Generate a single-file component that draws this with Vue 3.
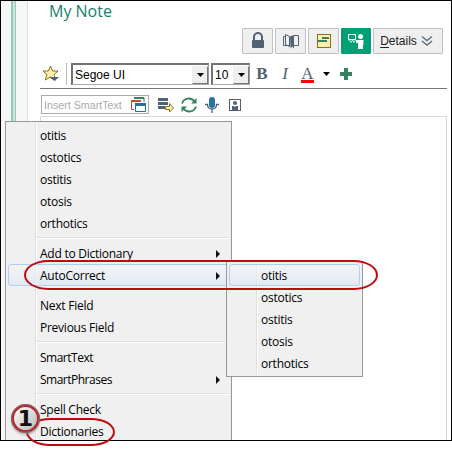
<script setup>
const words = ['otitis', 'ostotics', 'ostitis', 'otosis', 'orthotics']
const groups = [
  words.map((label) => ({ label })),
  [{ label: 'Add to Dictionary', sub: true }, { label: 'AutoCorrect', sub: true, active: true }],
  [{ label: 'Next Field' }, { label: 'Previous Field' }],
  [{ label: 'SmartText', tight: true }, { label: 'SmartPhrases', sub: true, tight: true }],
  [{ label: 'Spell Check' }, { label: 'Dictionaries' }],
]
</script>

<template>
  <div class="page">
    <div class="frame">
      <div class="gutter"><div class="stripe"></div></div>
      <main class="note">
        <h1>My Note</h1>
        <div class="actions">
          <button class="btn">
            <svg width="14" height="18" viewBox="0 0 14 18"><path d="M3 8V5a4 4 0 0 1 8 0v3" fill="none" stroke="#506273" stroke-width="2" /><rect x="1" y="8" width="12" height="8" rx="1" fill="#506273" /></svg>
          </button>
          <button class="btn">
            <svg width="18" height="18" viewBox="0 0 18 18"><path d="M3.500 4.500H1.500V13.500H7M3.500 2.500L7.500 4.500V14.500L3.500 12.500ZM12 3.500H16.500V13.500H12" fill="none" stroke="#506273" /><path d="M8 4.500L12 3V16.500L10.200 14.500L8.500 16.500Z" fill="#506273" /></svg>
          </button>
          <button class="btn">
            <svg width="16" height="16" viewBox="0 0 16 16"><rect x="1.500" y="1.500" width="13" height="13" fill="#ffefac" stroke="#89711b" /><path d="M6 4h7v2H6z" fill="#34835e" /><path d="M2 7h9v2H2z" fill="#34835e" /></svg>
          </button>
          <button class="btn on">
            <svg width="18" height="18" viewBox="0 0 18 18"><path d="M1.500 2.500H8.500V7.500H1.500Z" fill="none" stroke="#fff" /><path d="M2 8L4 10.500L5.500 8L7 10.500L8.500 8" fill="none" stroke="#fff" stroke-width=".8" /><circle cx="13.500" cy="4.500" r="2.500" fill="#fff" /><path d="M9 8h7.500v5H16v4h-5v-6H9z" fill="#fff" /></svg>
          </button>
          <button class="btn details"><span><u>D</u>etails</span>
            <svg width="12" height="12" viewBox="0 0 12 12"><path d="M1 1.500L6 5.500L11 1.500M1 6L6 10L11 6" fill="none" stroke="#607080" stroke-width="1.500" /></svg>
          </button>
        </div>

        <div class="fontbar">
          <svg class="star" width="18" height="18" viewBox="0 0 18 18"><path d="M8.500 1L10.600 6H16L12 9.700L13.500 15L8.500 12L3.200 15L5 9.700L1 6H6.400Z" fill="#ffefac" stroke="#89711b" /><path d="M7 12h10l-4.500 4z" fill="#506273" /></svg>
          <i class="rule"></i>
          <div class="select family"><span>Segoe UI</span><b><svg width="7" height="4"><path d="M0 0h7L3.500 4z" /></svg></b></div>
          <div class="select size"><span>10</span><b><svg width="7" height="4"><path d="M0 0h7L3.500 4z" /></svg></b></div>
          <span class="glyph bold">B</span>
          <span class="glyph ital">I</span>
          <span class="glyph color">A</span>
          <svg class="caret" width="7" height="4"><path d="M0 0h7L3.500 4z" /></svg>
          <svg class="plus" width="12" height="12"><path d="M4 0h4v4h4v4H8v4H4V8H0V4h4z" fill="#34835e" /></svg>
        </div>

        <div class="smartbar">
          <div class="field"><span>Insert SmartText</span>
            <svg width="15" height="16" viewBox="0 0 15 16"><path d="M3.500 2V.5h9.500v4.500" fill="none" stroke="#34835e" /><path d="M3 0h10v2H3z" fill="#34835e" /><path d="M9.500 5V3.500H.500V12.500h2.500" fill="none" stroke="#c04d2b" /><path d="M0 3h10v2H0z" fill="#c04d2b" /><path d="M4.500 6.500h10v8h-10z" fill="#fff" stroke="#2572a5" /><path d="M4 6h11v3H4z" fill="#2572a5" /></svg>
          </div>
          <svg class="lines" width="17" height="16" viewBox="0 0 17 16"><path d="M0 1h10v3H0zM0 5h10v3H0zM0 9h7v3H0z" fill="#506273" /><path d="M7.500 9.500h4V6.500L15.500 11L11.500 15V12.500h-4z" fill="#ffefac" stroke="#89711b" /></svg>
          <svg class="refresh" width="16" height="16" viewBox="0 0 16 16"><path d="M1 6.500C3 0.500 10 0 13.500 4.500M15 9.500C13 15.500 6 16 2.500 11.500" fill="none" stroke="#34835e" stroke-width="1.800" /><path d="M15.500 1v5.500H10zM.5 15V9.500H6z" fill="#34835e" /></svg>
          <svg class="mic" width="14" height="16" viewBox="0 0 14 16"><rect x="4" y="0" width="6" height="11" rx="3" fill="#2572a5" /><path d="M0 7.500H2.500C2 13.500 12 13.500 11.500 7.500H14M7 12v4" fill="none" stroke="#506273" stroke-width="1.300" /></svg>
          <svg class="person" width="12" height="12" viewBox="0 0 12 12"><rect x=".5" y=".5" width="11" height="11" fill="#fff" stroke="#506273" /><circle cx="6" cy="4" r="2" fill="#506273" /><path d="M3 7h2l1 1 1-1h2v4H3z" fill="#506273" /></svg>
        </div>
        <div class="editor"></div>
      </main>

      <div class="menu main">
        <div v-for="(g, n) in groups" :key="n" class="group">
          <div v-for="item in g" :key="item.label" class="item" :class="{ active: item.active, tight: item.tight }">
            <span>{{ item.label }}</span>
            <svg v-if="item.sub" width="4" height="8"><path d="M0 0L4 4L0 8z" fill="#111" /></svg>
          </div>
        </div>
      </div>
      <div class="menu submenu">
        <div v-for="(w, n) in words" :key="w" class="item" :class="{ active: n === 0 }"><span>{{ w }}</span></div>
      </div>
    </div>
    <div class="ring wide"></div>
    <div class="ring small"></div>
    <div class="badge">1</div>
  </div>
</template>

<style>
body { margin: 0; background: #fff; overflow: hidden; }
</style>

<style scoped>
* { box-sizing: border-box; }
.page { position: relative; width: 452px; height: 449px; background: #fff; font-family: "Liberation Sans", sans-serif; }
.frame { position: relative; display: flex; width: 452px; height: 441px; border: 1px solid #000; overflow: hidden; }
.gutter { width: 27px; flex: none; background: #f7f7f7; border-right: 1px solid #dcdcdc; padding-left: 10px; }
.stripe { width: 5px; height: 100%; background: #cfe3de; border: solid #8fcdbd; border-width: 0 1px 0 2px; }
.note { flex: 1; display: flex; flex-direction: column; padding: 0 4px 0 12px; }
h1 { margin: 0 0 0 9px; height: 27px; font: 16px/21px "Open Sans", sans-serif; color: #16816c; white-space: nowrap; }
.actions { display: flex; justify-content: flex-end; gap: 2px; padding-right: 4px; height: 26px; }
.btn { width: 31px; height: 26px; padding: 0; display: flex; align-items: center; justify-content: center; background: #efefef; border: 1px solid #bfc0c6; border-radius: 1px; font: 12px "Liberation Sans", sans-serif; color: #222; }
.btn.on { width: 30px; background: #00a077; border-color: #00a077; }
.btn.details { width: 70px; gap: 4px; padding-right: 3px; }
u { text-underline-offset: 2px; }
.fontbar { display: flex; align-items: center; height: 35px; padding-top: 6px; margin-bottom: 6px; border-bottom: 1px solid #777; }
.star { margin-left: 2px; margin-right: 6px; }
.rule { width: 1px; height: 22px; background: #bbb; margin-right: 4px; }
.select { height: 22px; display: flex; align-items: center; border: 2px solid #737373; border-right: 1px solid #999; border-bottom: 1px solid #aaa; font-size: 12px; color: #000; background: #fff; }
.select span { flex: 1; padding-left: 2px; }
.select b { width: 16px; height: 18px; background: #efefef; border: 1px solid #eee; border-right-color: #777; border-bottom-color: #777; display: flex; align-items: center; justify-content: center; }
.family { width: 138px; margin-right: 2px; }
.size { width: 39px; }
.glyph { height: 20px; text-align: center; font: 17px/20px "Liberation Serif", serif; color: #506273; }
.bold { width: 12px; margin-left: 6px; font-weight: bold; }
.ital { width: 10px; margin-left: 12px; font-style: italic; }
.color { width: 13px; height: 17px; line-height: 15px; margin-left: 11px; border-bottom: 3px solid #f00; }
.caret { margin-left: 9px; }
.plus { margin-left: 10px; }
.smartbar { display: flex; align-items: center; height: 19px; margin-left: 1px; }
.field { width: 108px; height: 19px; border: 1px solid #aaa; display: flex; align-items: center; justify-content: space-between; padding: 0 2px; font-size: 10.7px; color: #aaa; white-space: nowrap; }
.lines { margin-left: 9px; }
.refresh { margin-left: 6px; }
.mic { margin-left: 8px; }
.person { margin-left: 10px; }
.editor { flex: 1; margin: 2px 0 0 0; border: 1px solid #d8dada; border-bottom: 0; }
.menu { position: absolute; padding: 2px; border: 1px solid #979797; background: linear-gradient(90deg, transparent 29px, #dfdfdf 29px, #dfdfdf 30px, #fff 30px, #fff 31px, transparent 31px) no-repeat 0 2px / 100% 100%, #f0f0f0; font: 12px/20px "Open Sans", sans-serif; color: #000; }
.main { left: 4px; top: 120px; width: 227px; height: 330px; }
.submenu { left: 225px; top: 260px; width: 137px; height: 116px; background-size: 100% 110px; }
.item { height: 22px; display: flex; align-items: center; justify-content: space-between; padding: 1px 8px 0 31px; border: 1px solid transparent; border-radius: 3px; letter-spacing: -0.25px; }
.tight { letter-spacing: -0.5px; }
.active { border-color: #aecff7; background: linear-gradient(rgba(245,246,248,.6), rgba(220,230,243,.6)); }
.group + .group::before { content: ""; display: block; height: 2px; margin: 3px 0 3px 28px; background: linear-gradient(#e0e0e0 50%, #fff 50%); }
.group + .group { display: flow-root; }
.ring { position: absolute; border: 2px solid #bf0b0f; }
.wide { left: 24px; top: 260px; width: 354px; height: 30px; border-radius: 24px / 15px; }
.small { left: 26px; top: 418px; width: 89px; height: 28px; border-radius: 24px / 14px; }
.badge { position: absolute; left: 11px; top: 404px; width: 29px; height: 29px; border: 3px solid #ba2630; border-radius: 50%; outline: 1px solid #777; outline-offset: -1px; background: linear-gradient(135deg, #fff, #b9b9b9); font: bold 22px/23px "DejaVu Sans", sans-serif; text-align: center; color: #111; box-shadow: 0 2px 2px #8888; }
</style>
